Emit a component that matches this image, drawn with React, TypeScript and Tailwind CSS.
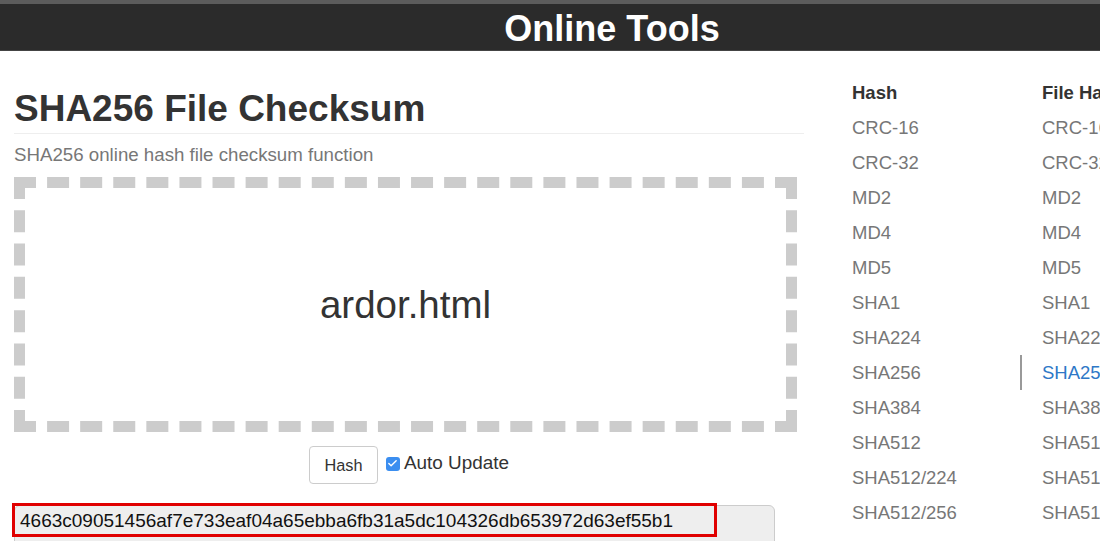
import { Check } from 'lucide-react'

const hashLinks = ['CRC-16', 'CRC-32', 'MD2', 'MD4', 'MD5', 'SHA1', 'SHA224', 'SHA256', 'SHA384', 'SHA512', 'SHA512/224', 'SHA512/256', 'SHA3-224']

function SideColumn({ title, active }: { title: string; active?: string }) {
  return (
    <div className="flex flex-col w-[190px] shrink-0">
      <div className="h-[35px] flex items-center pl-[22px] text-[18.5px] font-bold text-[#333]">{title}</div>
      {hashLinks.map((name) => (
        <div
          key={name}
          className={
            name === active
              ? 'h-[35px] flex items-center pl-[20px] border-l-2 border-[#999] text-[18.5px] text-[#2e78c7]'
              : 'h-[35px] flex items-center pl-[22px] text-[18.5px] text-[#777]'
          }
        >
          {name}
        </div>
      ))}
    </div>
  )
}

export default function App() {
  return (
    <div className="w-[1100px] h-[541px] overflow-hidden bg-white text-[#333]" style={{ fontFamily: '"Liberation Sans", Arial, sans-serif' }}>
      <header className="h-[51px] bg-[#2b2b2b] border-t-4 border-[#5c5c5c] border-b border-b-[#444] flex items-center justify-center pl-[124px] pt-[3px]">
        <span className="text-white text-[36px] font-bold leading-none">Online Tools</span>
      </header>

      <div className="flex">
        <main className="ml-[14px] w-[790px] shrink-0">
          <h1 className="mt-[38px] text-[37px] font-bold leading-[40px] text-[#333] pb-[4px] border-b border-[#eee]">SHA256 File Checksum</h1>
          <p className="mt-[10px] text-[18.7px] leading-[22px] text-[#777]">SHA256 online hash file checksum function</p>

          <div className="mt-[11px] w-[783px] h-[255px] border-[11px] border-dashed border-[#ccc] flex items-center justify-center">
            <span className="text-[38.5px] text-[#333]">ardor.html</span>
          </div>

          <div className="mt-[14px] flex items-center justify-center gap-[8px]">
            <button className="w-[69px] h-[38px] border border-[#ccc] rounded-[4px] bg-white text-[16.3px] text-[#333]">Hash</button>
            <label className="flex items-center gap-[4px] text-[18.9px] text-[#333] -mt-[4px]">
              <span className="w-[14px] h-[14px] rounded-[3px] bg-[#3b8ef0] flex items-center justify-center mt-[2px]">
                <Check size={11} strokeWidth={3} color="white" />
              </span>
              Auto Update
            </label>
          </div>

          <div className="relative mt-[21px] -ml-[2px]">
            <div className="ml-[2px] w-[761px] h-[60px] bg-[#eee] border border-[#ccc] rounded-[6px] pl-[5px] pt-[3px] text-[19px] leading-[24px] text-[#111]">
              4663c09051456af7e733eaf04a65ebba6fb31a5dc104326db653972d63ef55b1
            </div>
            <div className="absolute left-0 top-[-2px] w-[705px] h-[34px] border-[3px] border-[#e00000]" />
          </div>
        </main>

        <aside className="ml-[26px] mt-[24px] flex">
          <SideColumn title="Hash" />
          <SideColumn title="File Hash" active="SHA256" />
        </aside>
      </div>
    </div>
  )
}
